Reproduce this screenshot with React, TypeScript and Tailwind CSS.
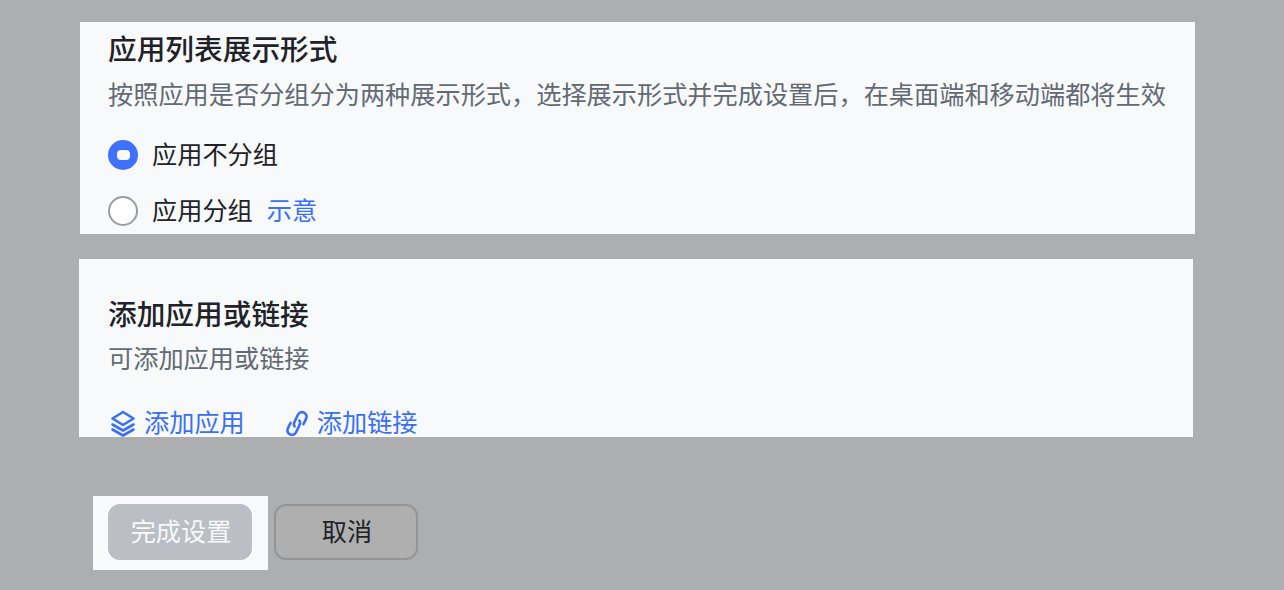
const font = { fontFamily: '"Noto Sans CJK SC", "Liberation Sans", sans-serif' }

function Radio({ checked }: { checked?: boolean }) {
  if (checked) {
    return (
      <span className="flex h-[30px] w-[30px] items-center justify-center rounded-full bg-[#4070ff]">
        <span className="h-[10px] w-[13px] rounded-[4px] bg-[#f8f9fb]" />
      </span>
    )
  }
  return <span className="h-[30px] w-[30px] rounded-full border-2 border-[#9a9ca3] bg-white" />
}

function LayersIcon() {
  return (
    <svg width="26" height="27" viewBox="0 0 26 27" fill="none" stroke="currentColor" strokeWidth="2.6" strokeLinejoin="round" strokeLinecap="round">
      <path d="M13 2 L23.5 8.5 L13 15 L2.5 8.5 Z" />
      <path d="M2.5 14.5 L13 20.5 L23.5 14.5" />
      <path d="M2.5 19.5 L13 25.5 L23.5 19.5" />
    </svg>
  )
}

function ChainIcon() {
  return (
    <svg width="22" height="27" viewBox="0 0 22 27" fill="none" stroke="currentColor" strokeWidth="2.6" strokeLinecap="round">
      <path d="M8.6 16.4 C7.4 14.6 7.8 12.8 9 10.8 L11.8 5 C13 2.4 15.6 1.4 18 2.6 C20.4 3.8 21.2 6.4 20 8.8 L17.4 14.2" />
      <path d="M13.4 10.6 C14.6 12.4 14.2 14.2 13 16.2 L10.2 22 C9 24.6 6.4 25.6 4 24.4 C1.6 23.2 0.8 20.6 2 18.2 L4.6 12.8" />
    </svg>
  )
}

export default function App() {
  return (
    <div className="h-[590px] w-[1284px] overflow-hidden bg-[#adaeb0]" style={font}>
      <div className="h-[22px]" />
      {/* list display section */}
      <section className="ml-[80px] h-[212px] w-[1115px] overflow-hidden bg-[#f8f9fb] pl-[28px]">
        <h2 className="-mt-[2px] h-[56px] text-[28.7px] font-medium leading-[56px] text-[#1f2329]">应用列表展示形式</h2>
        <p className="h-[34px] whitespace-nowrap text-[25.2px] leading-[34px] text-[#646a73]">
          按照应用是否分组分为两种展示形式，选择展示形式并完成设置后，在桌面端和移动端都将生效
        </p>
        <div className="mt-[30px] flex h-[30px] items-center gap-[14px] text-[25.2px] text-[#1f2329]">
          <Radio checked />
          <span className="pb-[2px]">应用不分组</span>
        </div>
        <div className="mt-[26px] flex h-[30px] items-center gap-[14px] text-[25.2px] text-[#1f2329]">
          <Radio />
          <span className="pb-[2px]">应用分组</span>
          <span className="pb-[2px] text-[#3a70f5]">示意</span>
        </div>
      </section>

      {/* add app section */}
      <section className="ml-[79px] mt-[25px] h-[178px] w-[1114px] bg-[#f8f9fb] pl-[29px]">
        <h2 className="pt-[33px] text-[28.7px] font-medium leading-[42px] text-[#1f2329]">添加应用或链接</h2>
        <p className="mt-[3px] h-[40px] text-[25.2px] leading-[40px] text-[#646a73]">可添加应用或链接</p>
        <div className="mt-[30px] flex h-[28px] items-center text-[25.2px] leading-[28px] text-[#3a70f5]">
          <span className="ml-[2px] pt-[4px]"><LayersIcon /></span>
          <span className="ml-[8px]">添加应用</span>
          <span className="ml-[41px] pt-[4px]"><ChainIcon /></span>
          <span className="ml-[9px]">添加链接</span>
        </div>
      </section>

      {/* footer buttons */}
      <div className="ml-[93px] mt-[59px] flex items-start">
        <div className="h-[74px] w-[175px] bg-[#f8f9fb] pl-[15px] pt-[8px]">
          <button className="h-[56px] w-[144px] rounded-[12px] bg-[#bbbec4] pb-[3px] pl-[2px] text-[25.2px] text-[#f8f9fb]">完成设置</button>
        </div>
        <button className="ml-[6px] mt-[8px] h-[56px] w-[144px] rounded-[12px] border-2 border-[#939496] bg-[#afafaf] pb-[3px] pl-[2px] text-[25.2px] text-[#1f2329]">
          取消
        </button>
      </div>
    </div>
  )
}
